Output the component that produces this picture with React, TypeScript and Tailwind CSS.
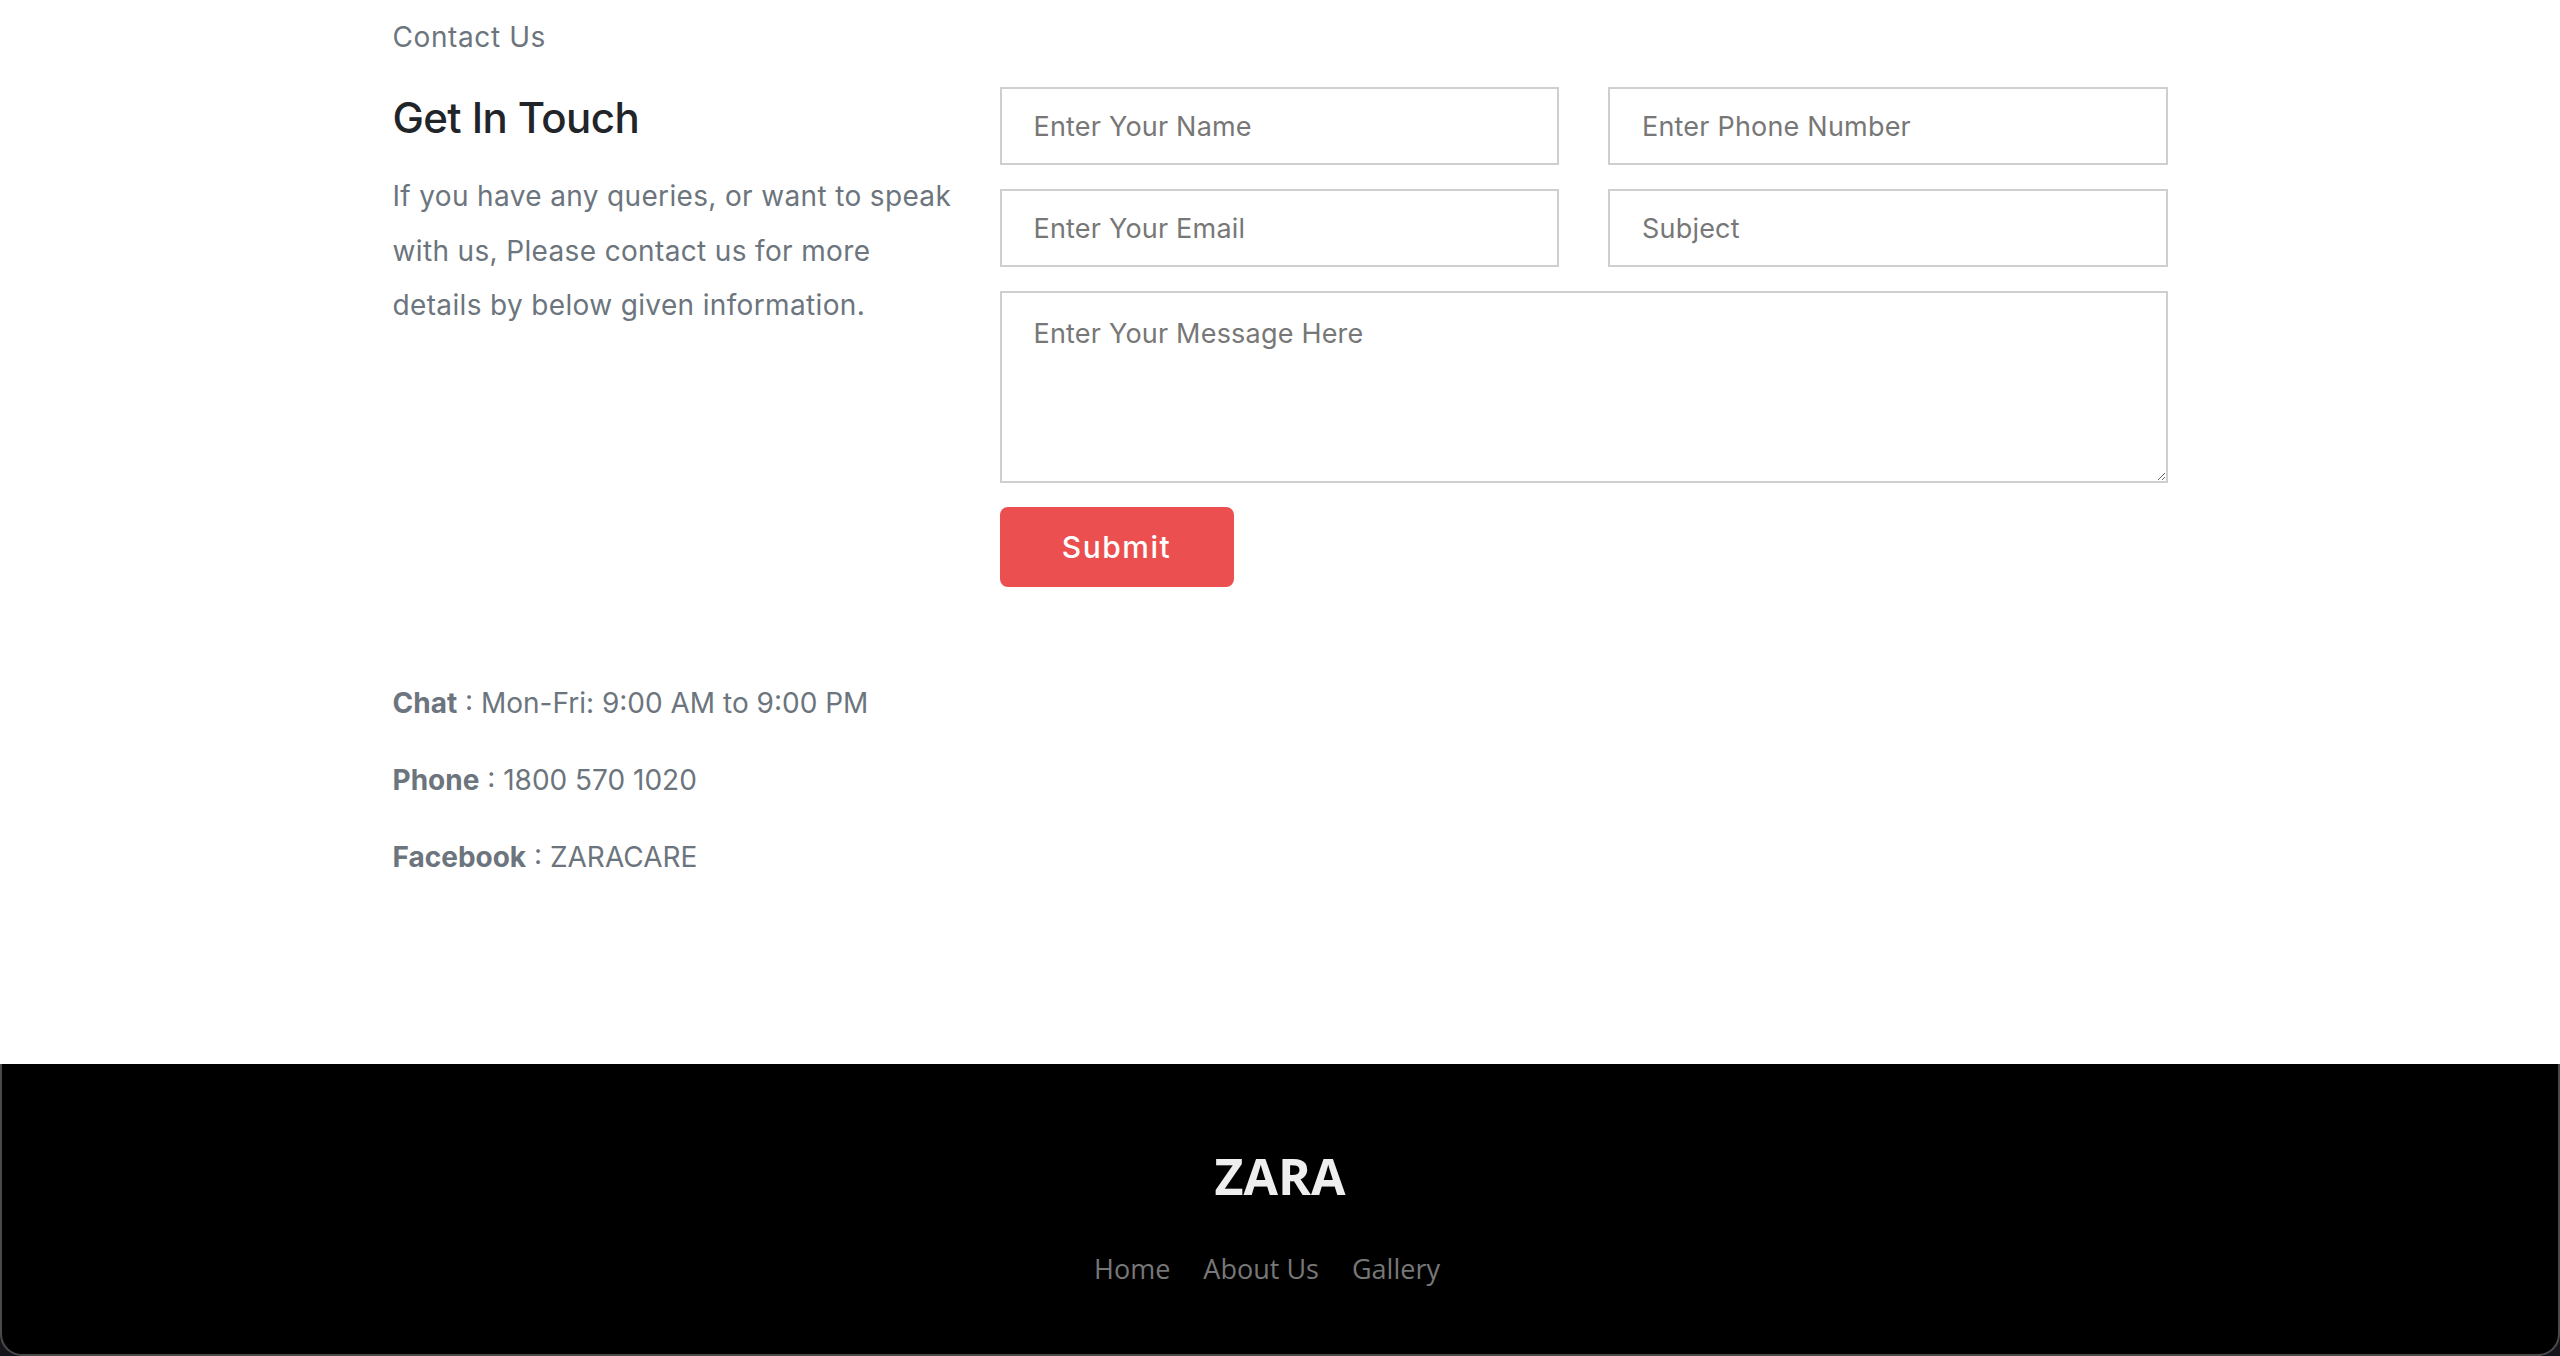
import React from "react";

const inputCls =
  "h-[78px] w-full border-2 border-[#cfcfcf] bg-white px-[32px] text-[27px] tracking-[0.2px] text-[#555] placeholder:text-[#777] outline-none";

export default function App() {
  return (
    <div className="flex min-h-[1356px] flex-col bg-white" style={{ fontFamily: "Inter, 'Noto Sans', sans-serif" }}>
      <main className="flex-1">
        <div className="mx-auto w-[1775px]">
          <p className="pt-[17px] text-[28px] leading-[40px] tracking-[0.6px] text-[#6c757d]">Contact Us</p>
          <div className="mt-[30px] flex">
            <div className="w-[607px] shrink-0">
              <h2 className="mt-[7px] text-[42px] font-medium leading-[48px] tracking-[-0.6px] text-[#212529]">
                Get In Touch
              </h2>
              <p className="mt-[27px] w-[566px] text-[28px] leading-[54.5px] tracking-[0.35px] text-[#6c757d]">
                If you have any queries, or want to speak with us, Please contact us for more details by below given information.
              </p>
            </div>
            <form className="flex flex-1 flex-col gap-[24px]" onSubmit={(e) => e.preventDefault()}>
              <div className="grid grid-cols-2 gap-x-[49px] gap-y-[24px]">
                <input className={inputCls} placeholder="Enter Your Name" />
                <input className={inputCls} placeholder="Enter Phone Number" />
                <input className={inputCls} placeholder="Enter Your Email" />
                <input className={inputCls} placeholder="Subject" />
              </div>
              <textarea
                className="block h-[192px] w-full resize-y border-2 border-[#cfcfcf] bg-white px-[32px] py-[21px] text-[27px] leading-[40px] tracking-[0.2px] text-[#555] placeholder:text-[#777] outline-none"
                placeholder="Enter Your Message Here"
              />
              <div>
                <button
                  type="submit"
                  className="h-[80px] w-[234px] rounded-[8px] bg-[#eb4f4f] text-[30px] font-medium tracking-[1.5px] text-white"
                >
                  Submit
                </button>
              </div>
            </form>
          </div>
          <div className="mt-[94px] text-[28px] leading-[44px] tracking-[0px] text-[#6c757d]">
            <p className="mb-[33px]">
              <span className="font-bold">Chat</span> : Mon-Fri: 9:00 AM to 9:00 PM
            </p>
            <p className="mb-[33px]">
              <span className="font-bold">Phone</span> : 1800 570 1020
            </p>
            <p className="mb-[33px]">
              <span className="font-bold">Facebook</span> : ZARACARE
            </p>
          </div>
        </div>
      </main>
      <div className="bg-[#14141c]">
        <footer
          className="flex h-[292px] flex-col items-center rounded-b-[22px] border-x-2 border-b-2 border-[#4a4a4a] bg-black"
          style={{ fontFamily: "'Open Sans', 'Noto Sans', sans-serif" }}
        >
          <div className="mt-[80px] text-[50px] font-bold leading-[64px] text-[#eeeeee]">ZARA</div>
          <nav className="mt-[41px] flex gap-[33px] pr-[26px] text-[27px] leading-[40px] tracking-[0px] text-[#777777]">
            <a href="#">Home</a>
            <a href="#">About Us</a>
            <a href="#">Gallery</a>
          </nav>
        </footer>
      </div>
    </div>
  );
}
